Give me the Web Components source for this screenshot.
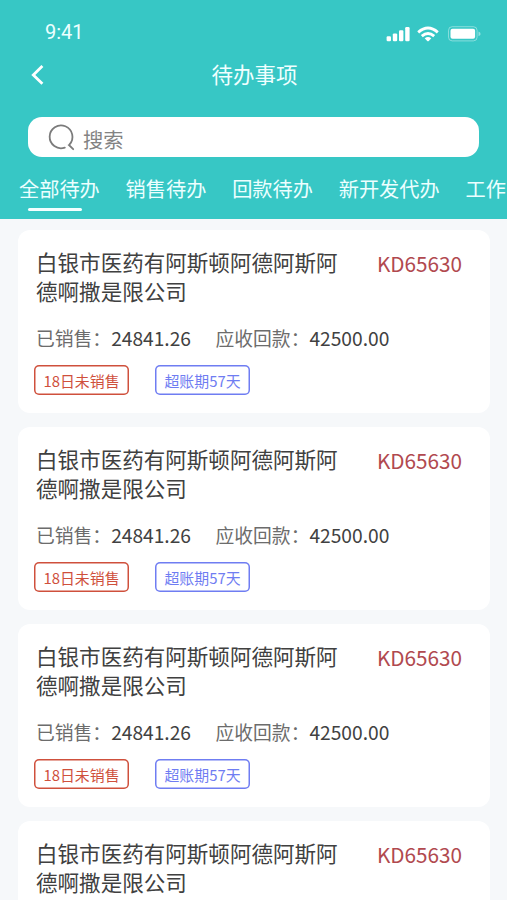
<!DOCTYPE html>
<html lang="zh-CN">
<head>
<meta charset="utf-8">
<title>待办事项</title>
<style>
html, body { margin: 0; height: 900px; overflow: hidden; }
body { background: #f6f8fa; font-family: "Noto Sans CJK SC", sans-serif; color: #404040; }
</style>
</head>
<body>
<todo-page></todo-page>
<script>
class Base extends HTMLElement {
  constructor() {
    super();
    this.attachShadow({ mode: 'open' }).innerHTML = this.view();
  }
}

customElements.define('status-bar', class extends Base {
  view() {
    return `<style>
      :host { display: flex; justify-content: space-between; align-items: center; height: 24px; padding: 20px 26px 0 45px; color: #ecffff; }
      time { font: 400 20px/24px Roboto, sans-serif; }
      svg { display: block; margin-top: 3px; }
    </style>
    <time>9:41</time>
    <svg width="96" height="18" viewBox="0 0 96 18" fill="#fff">
      <rect x="1.6" y="11.2" width="4.4" height="5" rx="1.2"/>
      <rect x="7.8" y="8.4" width="4.4" height="7.8" rx="1.2"/>
      <rect x="14" y="5.2" width="4.4" height="11" rx="1.2"/>
      <rect x="20.2" y="2" width="4.4" height="14.2" rx="1.2"/>
      <g fill="none" stroke="#fff" stroke-width="2.9">
        <path d="M33.2 7.3 Q43 -1.1 52.8 7.3"/>
        <path d="M36.8 11.1 Q43 5.7 49.2 11.1"/>
      </g>
      <path d="M39.7 13.3 Q43 10.6 46.3 13.3 L43.8 16 Q43 16.7 42.2 16 Z"/>
      <rect x="63.5" y="1.7" width="28.6" height="14.2" rx="3.7" fill="none" stroke="#fff" stroke-opacity=".4"/>
      <rect x="65.5" y="3.8" width="24.6" height="10" rx="2"/>
      <path d="M93.5 6.6 Q95.6 7.3 95.6 9 Q95.6 10.6 93.5 11.2 Z" fill-opacity=".45"/>
    </svg>`;
  }
});

customElements.define('nav-bar', class extends Base {
  view() {
    return `<style>
      :host { display: grid; grid-template-columns: 60px 1fr 60px; align-items: center; height: 60px; color: #f0ffff; }
      svg { display: block; margin-left: 30px; }
      h1 { margin: 0; text-align: center; font-weight: 400; font-size: 21.5px; line-height: 30px; padding-left: 2px; }
    </style>
    <svg width="16" height="22" viewBox="0 0 16 22" fill="none" stroke="#fff" stroke-width="2.8"><path d="M12.4 3 L3.3 12 L12.4 20.8"/></svg>
    <h1><slot></slot></h1>`;
  }
});

customElements.define('search-box', class extends Base {
  view() {
    return `<style>
      :host { display: flex; align-items: center; height: 40.5px; margin: 12.5px 28.5px 0 28px; padding-left: 20px; box-sizing: border-box; background: #fff; border-radius: 14px; color: #838383; font-size: 20.3px; line-height: 30px; }
      svg { flex: none; margin-right: 7px; }
      span { padding-top: 4px; }
    </style>
    <svg width="28" height="28" viewBox="0 0 28 28" fill="none" stroke="#7b7b7b" stroke-width="1.8" stroke-linecap="round"><path d="M16.8 24.6 A11.4 11.4 0 1 1 21.4 21.6 L20.9 22 L25.2 26.2"/></svg>
    <span><slot></slot></span>`;
  }
});

customElements.define('tab-item', class extends Base {
  view() {
    return `<style>
      :host { display: flex; flex-direction: column; flex: none; font-size: 20.2px; line-height: 30px; white-space: nowrap; color: #ecffff; }
      i { display: none; width: 54px; height: 3px; border-radius: 1.5px; background: #f4ffff; margin: 4px 0 0 9px; }
      :host([active]) i { display: block; }
    </style><slot></slot><i></i>`;
  }
});

customElements.define('tab-strip', class extends Base {
  view() {
    return `<style>
      :host { display: flex; gap: 25.8px; height: 46px; padding: 16.5px 0 0 19px; overflow: hidden; }
    </style><slot></slot>`;
  }
});

customElements.define('status-tag', class extends Base {
  view() {
    return `<style>
      :host { display: flex; justify-content: center; align-items: center; box-sizing: border-box; width: 95px; height: 30px; box-shadow: inset 0 0 0 1.5px currentColor; border-radius: 5px; font-size: 14.9px; line-height: 20px; white-space: nowrap; padding-top: 3px; }
      :host([tone="red"]) { color: #cf503c; }
      :host([tone="blue"]) { color: #6f7df2; }
    </style><slot></slot>`;
  }
});

customElements.define('todo-card', class extends Base {
  view() {
    return `<style>
      :host { display: block; flex: none; box-sizing: border-box; height: 183px; background: #fff; border-radius: 12px; padding: 17px 27.5px 0 18px; }
      header { display: flex; justify-content: space-between; }
      h2 { margin: 0; width: 304px; font-weight: 400; font-size: 21.55px; line-height: 29.3px; color: #404040; }
      b { font-weight: 400; font-size: 20.7px; line-height: 33px; color: #b1494f; }
      dl { display: flex; gap: 24.5px; margin: 18.4px 0 0; line-height: 28px; font-size: 18.8px; }
      div { display: flex; }
      dt { color: #6c6c6c; }
      dd { margin: 0; font-size: 19.2px; color: #414141; }
      footer { display: flex; gap: 26px; margin: 13px 0 0 -2px; }
      :host([brief]) dl, :host([brief]) footer { display: none; }
    </style>
    <header><h2><slot name="company"></slot></h2><b><slot name="code"></slot></b></header>
    <dl>
      <div><dt>已销售：</dt><dd><slot name="sold"></slot></dd></div>
      <div><dt>应收回款：</dt><dd><slot name="due"></slot></dd></div>
    </dl>
    <footer><slot></slot></footer>`;
  }
});

customElements.define('todo-page', class extends Base {
  view() {
    const head = `<span slot="company">白银市医药有阿斯顿阿德阿斯阿德啊撒是限公司</span>
      <span slot="code">KD65630</span>`;
    const card = `<todo-card>
      ${head}
      <span slot="sold">24841.26</span>
      <span slot="due">42500.00</span>
      <status-tag tone="red">18日未销售</status-tag>
      <status-tag tone="blue">超账期57天</status-tag>
    </todo-card>`;
    return `<style>
      :host { display: flex; flex-direction: column; height: 900px; overflow: hidden; }
      header { flex: none; height: 219px; background: #37c7c5; overflow: hidden; }
      main { display: flex; flex-direction: column; gap: 14px; padding: 11px 17.5px 0 18px; }
    </style>
    <header>
      <status-bar></status-bar>
      <nav-bar>待办事项</nav-bar>
      <search-box>搜索</search-box>
      <tab-strip>
        <tab-item active>全部待办</tab-item><tab-item>销售待办</tab-item><tab-item>回款待办</tab-item><tab-item>新开发代办</tab-item><tab-item>工作</tab-item>
      </tab-strip>
    </header>
    <main>${card.repeat(3)}<todo-card brief>${head}</todo-card></main>`;
  }
});
</script>
</body>
</html>
